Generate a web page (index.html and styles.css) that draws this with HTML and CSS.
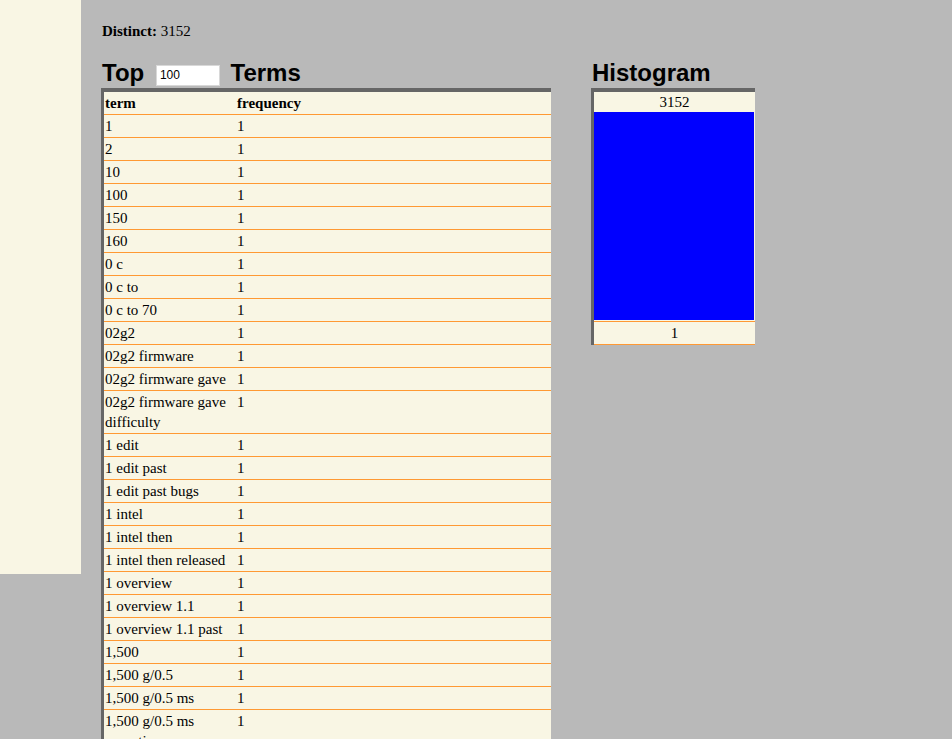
FILE: index.html
```html
<!DOCTYPE html>
<html>
<head>
<meta charset="utf-8">
<title>Terms</title>
<link rel="stylesheet" href="styles.css">
</head>
<body>
<div class="page">
  <div class="sidebar"></div>
  <div class="main">
    <p class="distinct"><b>Distinct:</b> 3152</p>
    <div class="panels">
      <div class="panel terms-panel">
        <h2 class="title">Top <input class="top-input" type="text" value="100"> Terms</h2>
        <table class="terms">
          <colgroup><col class="col-term"><col></colgroup>
          <tr><th>term</th><th>frequency</th></tr>
          <tr><td>1</td><td>1</td></tr>
          <tr><td>2</td><td>1</td></tr>
          <tr><td>10</td><td>1</td></tr>
          <tr><td>100</td><td>1</td></tr>
          <tr><td>150</td><td>1</td></tr>
          <tr><td>160</td><td>1</td></tr>
          <tr><td>0 c</td><td>1</td></tr>
          <tr><td>0 c to</td><td>1</td></tr>
          <tr><td>0 c to 70</td><td>1</td></tr>
          <tr><td>02g2</td><td>1</td></tr>
          <tr><td>02g2 firmware</td><td>1</td></tr>
          <tr><td>02g2 firmware gave</td><td>1</td></tr>
          <tr><td>02g2 firmware gave difficulty</td><td>1</td></tr>
          <tr><td>1 edit</td><td>1</td></tr>
          <tr><td>1 edit past</td><td>1</td></tr>
          <tr><td>1 edit past bugs</td><td>1</td></tr>
          <tr><td>1 intel</td><td>1</td></tr>
          <tr><td>1 intel then</td><td>1</td></tr>
          <tr><td>1 intel then released</td><td>1</td></tr>
          <tr><td>1 overview</td><td>1</td></tr>
          <tr><td>1 overview 1.1</td><td>1</td></tr>
          <tr><td>1 overview 1.1 past</td><td>1</td></tr>
          <tr><td>1,500</td><td>1</td></tr>
          <tr><td>1,500 g/0.5</td><td>1</td></tr>
          <tr><td>1,500 g/0.5 ms</td><td>1</td></tr>
          <tr><td>1,500 g/0.5 ms operation</td><td>1</td></tr>
          <tr><td>1.1</td><td>1</td></tr>
          <tr><td>1.1 past</td><td>1</td></tr>
        </table>
      </div>
      <div class="panel hist-panel">
        <h2 class="title">Histogram</h2>
        <table class="hist">
          <tr><td class="hist-max">3152</td></tr>
          <tr><td class="hist-barcell"><div class="hist-bar"></div></td></tr>
          <tr><td class="hist-min">1</td></tr>
        </table>
      </div>
    </div>
  </div>
</div>
</body>
</html>
```
FILE: styles.css
```css
html {
  background: #b9b9b9;
}
body {
  margin: 0;
  font-family: "Liberation Serif", "Times New Roman", serif;
  font-size: 15px;
  color: #000;
}
.page {
  display: flex;
  align-items: flex-start;
}
.sidebar {
  flex: none;
  width: 81px;
  height: 574px;
  background: #f9f6e4;
}
.main {
  padding: 22px 0 0 20px;
}
.distinct {
  margin: 0 0 0 1px;
  line-height: 18px;
}
.panels {
  display: flex;
  gap: 40px;
  margin-top: 17px;
  align-items: flex-start;
}
.title {
  margin: 0 0 0 1px;
  font-family: "Liberation Sans", Arial, sans-serif;
  font-weight: bold;
  font-size: 24px;
  line-height: 31px;
  height: 31px;
  white-space: nowrap;
}
.top-input {
  width: 64px;
  height: 21px;
  box-sizing: border-box;
  border: 1px solid #d8d8d8;
  background: #fff;
  padding: 0 3px;
  font-family: "Liberation Sans", Arial, sans-serif;
  font-size: 12px;
  color: #000;
  vertical-align: 2px;
  margin: 0 4px 0 5px;
}
.terms {
  width: 450px;
  table-layout: fixed;
  border-collapse: separate;
  border-spacing: 0;
  border-top: 4px solid #666;
  border-left: 3px solid #666;
  background: #f9f6e4;
}
.col-term {
  width: 132px;
}
.terms th,
.terms td {
  text-align: left;
  vertical-align: top;
  padding: 1px;
  line-height: 20px;
  border-bottom: 1px solid #ff9933;
  font-size: 15px;
}
.terms th {
  font-weight: bold;
}
.hist {
  width: 164px;
  border-collapse: separate;
  border-spacing: 0;
  border-top: 4px solid #666;
  border-left: 3px solid #666;
  background: #f9f6e4;
}
.hist td {
  padding: 0;
  text-align: center;
}
.hist-max {
  line-height: 20px;
}
.hist-barcell {
  padding: 0 1px 1px 0 !important;
  border-bottom: 1px solid #ff9933;
}
.hist-bar {
  height: 208px;
  background: #0000ff;
}
.hist-min {
  line-height: 22px;
  border-bottom: 1px solid #ff9933;
}
```
